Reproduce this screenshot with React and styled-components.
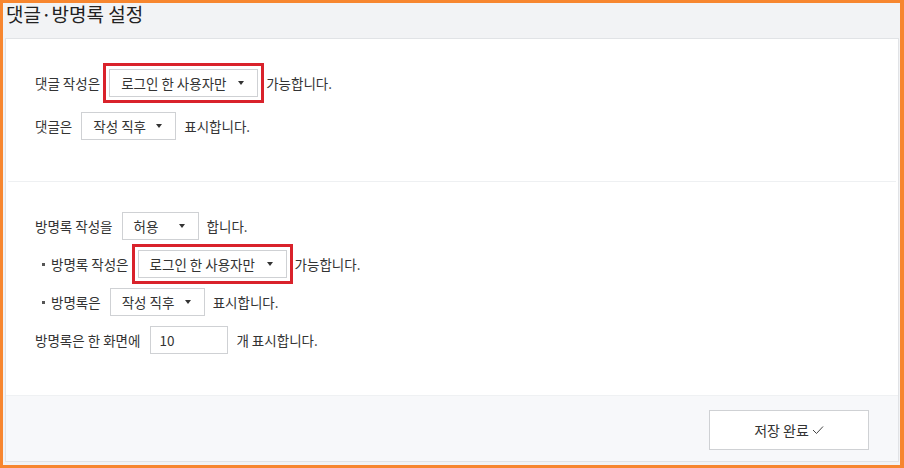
import React from "react";
import styled, { createGlobalStyle } from "styled-components";

const GlobalStyle = createGlobalStyle`
  html, body {
    margin: 0;
    padding: 0;
  }
  body {
    font-family: "Noto Sans CJK KR", "Noto Sans", sans-serif;
    color: #333;
  }
`;

const Frame = styled.div`
  box-sizing: border-box;
  width: 904px;
  height: 468px;
  border-style: solid;
  border-color: #f7862f;
  border-width: 3px 4px 3px 3px;
  background: #f2f3f5;
  display: flex;
  flex-direction: column;
`;

const Title = styled.h2`
  margin: 0;
  height: 35px;
  padding-left: 3px;
  font-size: 19px;
  line-height: 22px;
  font-weight: 400;
  color: #222;
`;

const Card = styled.div`
  flex: 1;
  margin: 0 1px 3px 2px;
  border: 1px solid #e1e3e6;
  background: #fff;
  display: flex;
  flex-direction: column;
`;

const Section = styled.div`
  display: flex;
  flex-direction: column;
  gap: ${(props) => props.gap}px;
  padding: 30px 0 ${(props) => props.bottom}px 29px;
`;

const Divider = styled.hr`
  margin: 0 2px;
  border: none;
  height: 1px;
  background: #eef0f2;
`;

const Row = styled.div`
  display: flex;
  align-items: center;
  height: 28px;
  font-size: 13.5px;
  color: #333;
  padding-left: ${(props) => (props.bullet ? "7px" : "0")};
`;

const Bullet = styled.span`
  width: 3px;
  height: 3px;
  background: #555;
  margin-right: 6px;
`;

const Select = styled.div`
  box-sizing: border-box;
  width: ${(props) => props.width}px;
  height: 28px;
  margin: 0 8px 0 9px;
  padding: 0 13px 0 11px;
  border: 1px solid #cfd1d4;
  background: #fff;
  display: flex;
  align-items: center;
  justify-content: space-between;
  font-size: 13.5px;
  color: #333;
  outline: ${(props) => (props.marked ? "3px solid #d9222b" : "none")};
  outline-offset: 3px;
`;

const Arrow = styled.span`
  width: 0;
  height: 0;
  border-left: 3px solid transparent;
  border-right: 3px solid transparent;
  border-top: 4px solid #333;
`;

const NumberInput = styled.input`
  box-sizing: border-box;
  width: 78px;
  height: 28px;
  margin: 0 8px 0 10px;
  padding: 0 8px;
  border: 1px solid #cfd1d4;
  font-family: inherit;
  font-size: 13.5px;
  color: #333;
  outline: none;
`;

const Spacer = styled.div`
  flex: 1;
`;

const Footer = styled.div`
  height: 66px;
  background: #f7f8fa;
  border-top: 1px solid #eff1f3;
  box-sizing: border-box;
  display: flex;
  align-items: center;
  justify-content: flex-end;
  padding: 2px 29px 0 0;
`;

const SaveButton = styled.button`
  width: 160px;
  height: 40px;
  background: #fff;
  border: 1px solid #cfd1d4;
  font-family: inherit;
  font-size: 14px;
  color: #333;
  display: flex;
  align-items: center;
  justify-content: center;
  gap: 3px;
  cursor: pointer;
`;

const Dropdown = ({ label, width, marked }) => (
  <Select width={width} marked={marked}>
    <span>{label}</span>
    <Arrow />
  </Select>
);

export default function App() {
  return (
    <>
      <GlobalStyle />
      <Frame>
        <Title>댓글·방명록 설정</Title>
        <Card>
          <Section gap={15} bottom={41}>
            <Row>
              댓글 작성은
              <Dropdown label="로그인 한 사용자만" width={149} marked />
              가능합니다.
            </Row>
            <Row>
              댓글은
              <Dropdown label="작성 직후" width={95} />
              표시합니다.
            </Row>
          </Section>
          <Divider />
          <Section gap={10} bottom={0}>
            <Row>
              방명록 작성을
              <Dropdown label="허용" width={77} />
              합니다.
            </Row>
            <Row bullet>
              <Bullet />
              방명록 작성은
              <Dropdown label="로그인 한 사용자만" width={149} marked />
              가능합니다.
            </Row>
            <Row bullet>
              <Bullet />
              방명록은
              <Dropdown label="작성 직후" width={95} />
              표시합니다.
            </Row>
            <Row>
              방명록은 한 화면에
              <NumberInput defaultValue="10" />
              개 표시합니다.
            </Row>
          </Section>
          <Spacer />
          <Footer>
            <SaveButton>
              저장 완료
              <svg width="12" height="10" viewBox="0 0 12 10">
                <polyline points="1,5 4.5,8.5 11,1.5" fill="none" stroke="#444" strokeWidth="1" />
              </svg>
            </SaveButton>
          </Footer>
        </Card>
      </Frame>
    </>
  );
}
